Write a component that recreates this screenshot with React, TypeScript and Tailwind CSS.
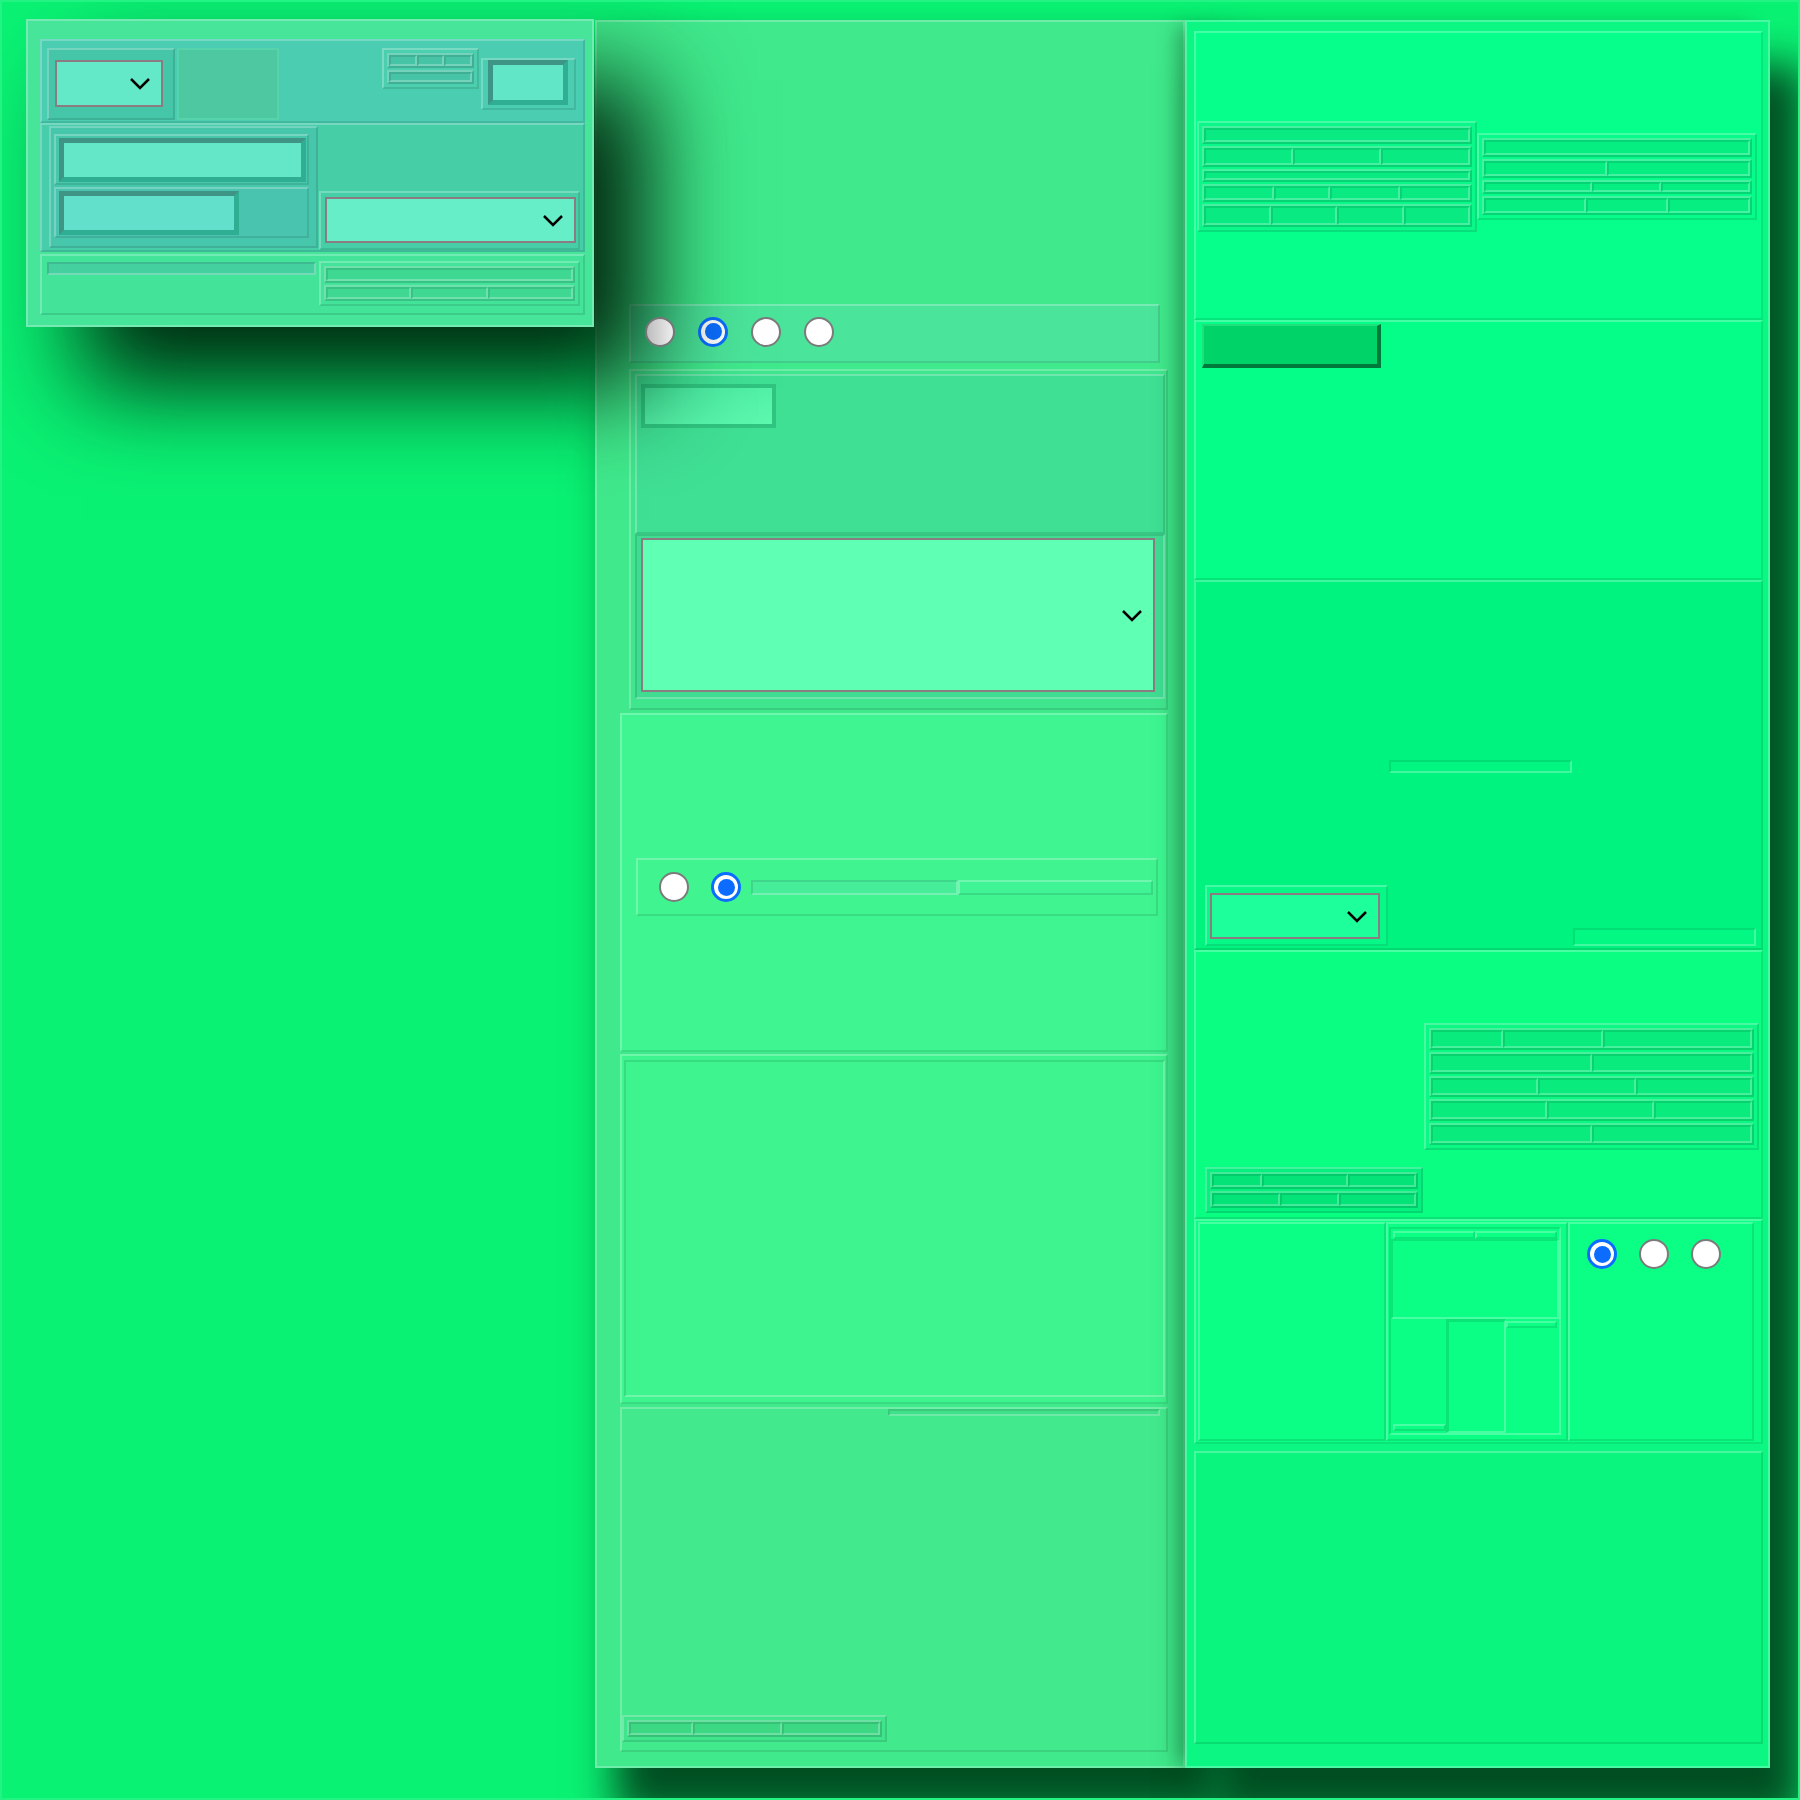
import React from 'react';

// bevel helpers
const OUT = 'border-2 border-t-white/25 border-l-white/25 border-r-black/10 border-b-black/10';
const IN = 'border-2 border-t-black/10 border-l-black/10 border-r-white/25 border-b-white/25';
const PANEL = 'border-2 border-white/25';

type Row = { g: number; segs: number[] };

const Chevron: React.FC = () => (
  <svg width="22" height="13" viewBox="0 0 22 13" fill="none">
    <polyline points="2,2 11,11 20,2" stroke="#000" strokeWidth="2.5" />
  </svg>
);

const Select: React.FC<{ className?: string }> = ({ className = '' }) => (
  <div className={`border-2 border-[#8a7c80] flex items-center justify-end pr-[10px] ${className}`}>
    <Chevron />
  </div>
);

const Radio: React.FC<{ state: 'on' | 'off' | 'disabled' }> = ({ state }) => {
  if (state === 'on') {
    return (
      <div className="w-[30px] h-[30px] shrink-0 rounded-full border-[3px] border-[#0b6cff] bg-white flex items-center justify-center">
        <div className="w-[17px] h-[17px] rounded-full bg-[#0b6cff]" />
      </div>
    );
  }
  if (state === 'disabled') {
    return <div className="relative z-20 w-[30px] h-[30px] shrink-0 rounded-full border-2 border-[#767676] bg-linear-to-r from-[#bdbdbd] to-[#eeeeee]" />;
  }
  return <div className="w-[30px] h-[30px] shrink-0 rounded-full border-2 border-[#7b7b7b] bg-white" />;
};

const Bars: React.FC<{ rows: Row[]; className?: string }> = ({ rows, className = '' }) => (
  <div className={`${OUT} flex flex-col gap-[2px] p-[3px] ${className}`}>
    {rows.map((r, i) => (
      <div key={i} className={`${OUT} flex bg-black/5 min-h-0`} style={{ flexGrow: r.g, flexBasis: 0 }}>
        {r.segs.map((w, j) => (
          <div key={j} className={`${IN} h-full`} style={{ flexGrow: w, flexBasis: 0 }} />
        ))}
      </div>
    ))}
  </div>
);

const Panel1: React.FC = () => (
  <div className={`w-[568px] h-[308px] bg-[#47e59a] ${PANEL} shadow-[55px_60px_90px_rgba(0,40,15,1)] pl-[12px] pt-[18px]`}>
    <div className="w-[545px] h-[276px] flex flex-col">
      {/* row A */}
      <div className={`h-[84px] shrink-0 bg-[#4acdb0] ${OUT} flex items-start pl-[5px] pr-[7px] pt-[7px]`}>
        <div className={`w-[128px] h-[72px] bg-[#45c6a8] ${OUT} pl-[6px] pt-[10px]`}>
          <Select className="w-[108px] h-[47px] bg-[#63e9c7]" />
        </div>
        <div className="ml-[2px] w-[102px] h-[72px] bg-[#4dc8a0] border-2 border-[#57d3ab]" />
        <div className="flex-1" />
        <Bars
          className="w-[97px] h-[41px] bg-[#4bcfae]"
          rows={[
            { g: 1, segs: [1, 1, 1] },
            { g: 1, segs: [1] },
          ]}
        />
        <div className={`ml-[2px] mt-[10px] w-[95px] h-[52px] bg-[#4acdb0] ${OUT} pl-[5px]`}>
          <div className="w-[80px] h-[45px] bg-[#62e6c8] border-[5px] border-t-[#3f9585] border-l-[#3f9585] border-r-[#2fae93] border-b-[#2fae93]" />
        </div>
      </div>
      {/* row B */}
      <div className={`h-[129px] shrink-0 bg-[#47cdaa] ${OUT} flex pl-[7px]`}>
        <div className={`mt-[1px] w-[269px] h-[122px] bg-[#46c6aa] ${OUT} pl-[3px] pt-[6px] flex flex-col gap-[2px]`}>
          <div className={`w-[255px] h-[51px] bg-[#47c8ab] ${OUT} pl-[3px] pt-[2px]`}>
            <div className="w-[247px] h-[44px] bg-[#64e6c8] border-[5px] border-t-[#3f9585] border-l-[#3f9585] border-r-[#2fae93] border-b-[#2fae93]" />
          </div>
          <div className={`w-[255px] h-[51px] bg-[#49c4ae] ${OUT} pl-[3px] pt-[2px]`}>
            <div className="w-[180px] h-[44px] bg-[#62e0cc] border-[5px] border-t-[#3f9585] border-l-[#3f9585] border-r-[#2fae93] border-b-[#2fae93]" />
          </div>
        </div>
        <div className="w-[265px] flex flex-col bg-[#46cfa6]">
          <div className="flex-1" />
          <div className={`ml-[1px] w-[261px] h-[59px] ${OUT} pl-[4px] pt-[4px]`}>
            <Select className="w-[251px] h-[46px] bg-[#66eec8]" />
          </div>
        </div>
      </div>
      {/* row C */}
      <div className={`mt-[2px] h-[61px] shrink-0 bg-[#43e49a] ${OUT} flex items-start pl-[5px] pt-[5px]`}>
        <div className={`mt-[1px] w-[269px] h-[13px] bg-[#45d0a0] ${IN}`} />
        <Bars
          className="ml-[3px] w-[261px] h-[45px]"
          rows={[
            { g: 1, segs: [1] },
            { g: 1, segs: [1, 0.9, 1] },
          ]}
        />
      </div>
    </div>
  </div>
);

const Middle: React.FC = () => (
  <div className={`mt-[1px] w-[590px] h-[1748px] shrink-0 bg-[#40e98c] ${PANEL} shadow-[30px_40px_40px_10px_rgba(0,70,30,0.95)] flex flex-col`}>
    <div className={`ml-[32px] mt-[282px] w-[531px] h-[59px] bg-[#4be49b] ${OUT} flex items-center gap-[23px] pl-[14px] pb-[4px]`}>
      <Radio state="disabled" />
      <Radio state="on" />
      <Radio state="off" />
      <Radio state="off" />
    </div>
    <div className={`ml-[32px] mt-[6px] w-[539px] h-[341px] bg-[#40e68e] ${OUT} pl-[4px] pt-[3px]`}>
      <div className={`w-[530px] h-[160px] bg-[#3fdf94] ${OUT} pl-[4px] pt-[8px]`}>
        <div className="w-[135px] h-[44px] border-[4px] border-[#2fc47f] bg-linear-to-br from-[#48e9a0] to-[#5cf8ae]" />
      </div>
      <div className={`w-[530px] h-[165px] bg-[#3fdc92] ${IN} pl-[4px] pt-[2px]`}>
        <Select className="w-[514px] h-[154px] bg-[#5fffb4]" />
      </div>
    </div>
    <div className={`ml-[23px] mt-[3px] w-[548px] h-[339px] bg-[#3ef592] ${OUT} pl-[14px] pt-[143px]`}>
      <div className={`w-[522px] h-[58px] bg-[#40f590] ${OUT} flex items-center pl-[21px]`}>
        <Radio state="off" />
        <div className="ml-[22px]">
          <Radio state="on" />
        </div>
        <div className="ml-[10px] w-[402px] h-[15px] flex">
          <div className={`w-[207px] h-full bg-[#47ee9a] ${IN}`} />
          <div className={`flex-1 h-full bg-[#40f394] ${OUT}`} />
        </div>
      </div>
    </div>
    <div className={`ml-[23px] mt-[2px] w-[548px] h-[350px] bg-[#3ef48f] ${OUT} pl-[2px] pt-[4px]`}>
      <div className={`w-[541px] h-[337px] bg-[#3ef48f] ${IN}`} />
    </div>
    <div className={`ml-[23px] mt-[3px] w-[548px] h-[345px] bg-[#42ea8d] ${OUT} flex flex-col`}>
      <div className={`self-end mr-[6px] w-[272px] h-[7px] bg-[#3fe28a] ${IN}`} />
      <div className="flex-1" />
      <Bars className="mb-[8px] w-[265px] h-[27px] bg-[#40e48c]" rows={[{ g: 1, segs: [0.7, 1, 1.1] }]} />
    </div>
  </div>
);

const Right: React.FC = () => (
  <div
    className={`mt-[1px] w-[585px] h-[1748px] shrink-0 bg-[#0cf684] ${PANEL} shadow-[30px_50px_40px_5px_rgba(0,70,30,0.95),-14px_0_18px_-6px_rgba(0,60,20,0.35)] flex flex-col pl-[7px]`}
  >
    {/* box 1 */}
    <div className={`mt-[9px] w-[569px] h-[289px] shrink-0 bg-[#05ff8a] ${OUT} flex items-start pl-[1px] pt-[88px]`}>
      <Bars
        className="w-[280px] h-[111px] bg-[#0af88a]"
        rows={[
          { g: 16, segs: [1] },
          { g: 20, segs: [1, 1, 1] },
          { g: 11, segs: [1] },
          { g: 17, segs: [1, 0.8, 1, 1] },
          { g: 22, segs: [1, 1, 1, 1] },
        ]}
      />
      <Bars
        className="mt-[12px] w-[280px] h-[87px] bg-[#07fb8a]"
        rows={[
          { g: 18, segs: [1] },
          { g: 19, segs: [1.2, 1.4] },
          { g: 13, segs: [1.6, 1, 1.3] },
          { g: 18, segs: [1.5, 1.2, 1.2] },
        ]}
      />
    </div>
    {/* box 2 */}
    <div className={`w-[569px] h-[260px] shrink-0 bg-[#04fe87] ${OUT} pl-[6px] pt-[2px]`}>
      <div className="w-[179px] h-[44px] bg-[#00d468] border-t-2 border-l-2 border-t-[#20e07c] border-l-[#20e07c] border-r-[4px] border-b-[4px] border-r-[#007a3a] border-b-[#007a3a]" />
    </div>
    {/* box 3 */}
    <div className={`w-[569px] h-[370px] shrink-0 bg-[#00f37e] ${OUT} flex flex-col`}>
      <div className={`ml-[193px] mt-[178px] w-[183px] h-[13px] bg-[#02f580] ${IN}`} />
      <div className="flex items-end mt-[112px]">
        <div className={`ml-[9px] w-[183px] h-[61px] bg-[#08f888] ${OUT} pl-[3px] pt-[6px]`}>
          <Select className="w-[170px] h-[46px] bg-[#1dff9a]" />
        </div>
        <div className={`ml-[185px] w-[183px] h-[18px] bg-[#02f882] ${IN}`} />
      </div>
    </div>
    {/* box 4 */}
    <div className={`w-[569px] h-[269px] shrink-0 bg-[#0aff82] ${OUT} flex flex-col`}>
      <Bars
        className="ml-[228px] mt-[71px] w-[335px] h-[127px] bg-[#0af883]"
        rows={[
          { g: 1, segs: [0.7, 1, 1.5] },
          { g: 1, segs: [1.6, 1.6] },
          { g: 1, segs: [1.1, 1, 1.2] },
          { g: 1, segs: [1.2, 1.1, 1] },
          { g: 1, segs: [1.6, 1.6] },
        ]}
      />
      <Bars
        className="ml-[9px] mt-[17px] w-[218px] h-[46px] bg-[#05f07f]"
        rows={[
          { g: 1, segs: [0.5, 0.9, 0.7] },
          { g: 1, segs: [0.7, 0.6, 0.8] },
        ]}
      />
    </div>
    {/* box 5 */}
    <div className={`w-[569px] h-[225px] shrink-0 bg-[#0bff84] ${OUT} flex pl-[2px] py-[1px]`}>
      <div className={`w-[188px] h-full ${OUT}`} />
      <div className={`w-[182px] h-full ${OUT} pl-[1px] pt-[3px]`}>
        <div className={`w-[172px] h-[208px] ${IN} flex flex-col`}>
          <div className="h-[10px] flex px-[2px] pt-[2px]">
            <div className={`flex-1 ${OUT}`} />
            <div className={`flex-1 ${OUT}`} />
          </div>
          <div className={`h-[80px] ${IN}`} />
          <div className="flex-1 flex">
            <div className="w-[55px] flex flex-col justify-end pb-[2px] pl-[2px]">
              <div className={`h-[7px] ${OUT}`} />
            </div>
            <div className={`w-[60px] ${IN} border-t-[3px] border-l-[3px]`} />
            <div className="flex-1 pt-[2px] pr-[2px]">
              <div className={`h-[7px] ${OUT}`} />
            </div>
          </div>
        </div>
      </div>
      <div className={`w-[186px] h-full ${OUT} flex items-start gap-[22px] pl-[17px] pt-[15px]`}>
        <Radio state="on" />
        <Radio state="off" />
        <Radio state="off" />
      </div>
    </div>
    {/* box 6 */}
    <div className={`mt-[7px] w-[569px] h-[293px] shrink-0 bg-[#0af57d] ${OUT}`} />
  </div>
);

const App: React.FC = () => (
  <div className="w-[1800px] h-[1800px] bg-[#0af274] overflow-hidden flex items-start pt-[17px] border-2 border-white/10 font-['Liberation_Sans',sans-serif]">
    <div className="w-[593px] shrink-0 pl-[24px] relative z-10">
      <Panel1 />
    </div>
    <Middle />
    <Right />
  </div>
);

export default App;
